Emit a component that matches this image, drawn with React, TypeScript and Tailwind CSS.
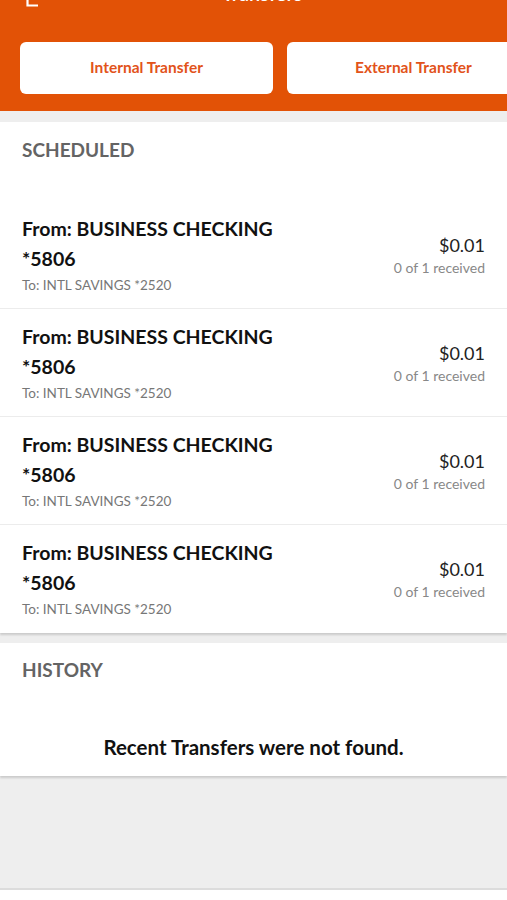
const rows = [0, 1, 2, 3].map((i) => ({
  id: i,
  from: 'From: BUSINESS CHECKING *5806',
  to: 'To: INTL SAVINGS *2520',
  amount: '$0.01',
  status: '0 of 1 received',
}));

export default function App() {
  return (
    <div className="h-[900px] flex flex-col bg-[#eeeeee] overflow-hidden" style={{ fontFamily: 'Lato, "Noto Sans", sans-serif' }}>
      <div className="bg-[#e25206] shrink-0">
        {/* top bar, scrolled almost out of view */}
        <div className="h-[8px] overflow-hidden relative">
          <svg className="absolute left-[26px] top-0" width="14" height="7" viewBox="0 0 14 7" fill="none">
            <path d="M1.5 0 V5.5 H12" stroke="white" strokeWidth="2.2" />
          </svg>
          <span className="absolute left-[222px] top-[-17px] text-[20px] font-semibold leading-none text-white">Transfers</span>
        </div>
        <div className="flex gap-[14px] pl-[20px] pt-[34px] pb-[17px] overflow-hidden">
          <button className="w-[253px] shrink-0 h-[52px] bg-white rounded-[6px] text-[#e2531a] text-[15.5px] font-bold">
            Internal Transfer
          </button>
          <button className="w-[253px] shrink-0 h-[52px] bg-white rounded-[6px] text-[#e2531a] text-[15.5px] font-bold">
            External Transfer
          </button>
        </div>
      </div>

      <div className="mt-[11px] bg-white shadow-[0_2px_2px_rgba(0,0,0,0.15)]">
        <div className="px-[22px] pt-[16px] pb-[39px] text-[19px] font-bold text-[#646464] leading-[24px]">SCHEDULED</div>
        {rows.map((r, i) => (
          <div
            key={r.id}
            className={`h-[108px] px-[22px] flex items-center justify-between ${i < rows.length - 1 ? 'border-b border-[#ececec]' : ''}`}
          >
            <div className="max-w-[265px]">
              <div className="text-[19.5px] font-bold text-[#111] leading-[30px]">{r.from}</div>
              <div className="text-[13.5px] text-[#777] leading-[22px]">{r.to}</div>
            </div>
            <div className="text-right">
              <div className="text-[18px] text-[#222] leading-[26px]">{r.amount}</div>
              <div className="text-[14px] text-[#888] leading-[20px]">{r.status}</div>
            </div>
          </div>
        ))}
      </div>

      <div className="mt-[10px] bg-white shadow-[0_2px_2px_rgba(0,0,0,0.15)] h-[133px]">
        <div className="px-[22px] pt-[15px] text-[19px] font-bold text-[#646464] leading-[24px]">HISTORY</div>
        <div className="pt-[53px] text-center text-[20.5px] font-bold text-[#111] leading-[24px]">
          Recent Transfers were not found.
        </div>
      </div>

      <div className="flex-1" />
      <div className="h-[12px] shrink-0 bg-white border-t-2 border-[#dcdcdc]" />
    </div>
  );
}
